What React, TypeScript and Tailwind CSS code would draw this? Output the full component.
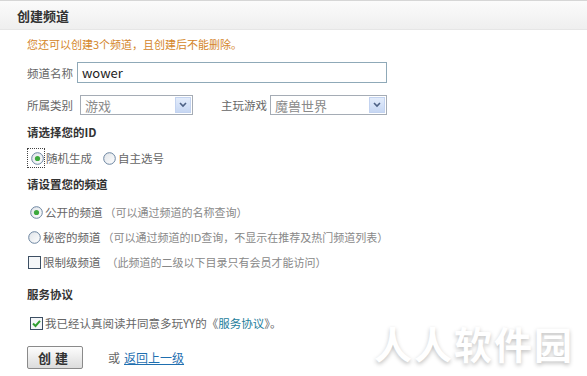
import React from 'react';

const font = { fontFamily: '"Noto Sans CJK SC", "Liberation Sans", sans-serif' };

function Radio({ checked }: { checked?: boolean }) {
  return (
    <svg width="13" height="13" viewBox="0 0 13 13" className="shrink-0">
      <defs>
        <linearGradient id="rg" x1="0" y1="0" x2="1" y2="1">
          <stop offset="0" stopColor="#dfe3e8" />
          <stop offset="1" stopColor="#ffffff" />
        </linearGradient>
      </defs>
      <circle cx="6.5" cy="6.5" r="5.8" fill="url(#rg)" stroke="#6b84a0" strokeWidth="1" />
      {checked && <circle cx="6.5" cy="6.5" r="2.6" fill="#3da93d" />}
    </svg>
  );
}

function Checkbox({ checked }: { checked?: boolean }) {
  return (
    <svg width="13" height="13" viewBox="0 0 13 13" className="shrink-0">
      <rect x="0.5" y="0.5" width="12" height="12" fill="#f4f6f8" stroke="#3d4f63" />
      {checked && <path d="M3 6.5 L5.5 9 L10 3.8" fill="none" stroke="#2f9e2f" strokeWidth="2" />}
    </svg>
  );
}

function Select({ value, width }: { value: string; width: string }) {
  return (
    <div className={`flex h-[20px] items-center border border-[#a5acb5] bg-white ${width}`}>
      <span className="flex-1 whitespace-nowrap pl-[4px] text-[13px] leading-none text-[#8a8a8a]">{value}</span>
      <div className="mr-[1px] flex h-[16px] w-[16px] items-center justify-center border border-[#c3d3f0] bg-gradient-to-b from-[#e3ecfb] to-[#c7d7f3]">
        <svg width="8" height="6" viewBox="0 0 8 6">
          <path d="M1 1 L4 4 L7 1" fill="none" stroke="#4d6185" strokeWidth="1.6" />
        </svg>
      </div>
    </div>
  );
}

export default function App() {
  return (
    <div className="relative h-[376px] w-[587px] overflow-hidden bg-white" style={font}>
      <div className="flex h-[30px] items-center border-t border-b border-t-[#d6d6d6] border-b-[#e6e6e6] bg-gradient-to-b from-[#fbfbfb] to-[#efefef] pl-[17px]">
        <span className="text-[13px] leading-none font-bold text-[#333]">创建频道</span>
      </div>

      <div className="flex flex-col whitespace-nowrap pl-[27px] text-[11.5px] leading-[16px] text-[#666]">
        <div className="mt-[6px] h-[16px] text-[11px] text-[#d4862a]">您还可以创建3个频道，且创建后不能删除。</div>

        <div className="mt-[10px] flex h-[21px] items-center">
          <span className="w-[50px]">频道名称</span>
          <div className="flex h-[21px] w-[310px] items-center border border-[#8fa9b8] pl-[4px] text-[13px] text-[#222]">
            wower
          </div>
        </div>

        <div className="mt-[12px] flex h-[20px] items-center">
          <span className="w-[53px]">所属类别</span>
          <Select value="游戏" width="w-[113px]" />
          <span className="ml-[28px] w-[49px]">主玩游戏</span>
          <Select value="魔兽世界" width="w-[117px]" />
        </div>

        <div className="mt-[9px] h-[16px] font-bold text-[#333]">请选择您的ID</div>

        <div className="mt-[8px] flex h-[20px] items-center">
          <div className="flex h-[20px] items-center border border-dotted border-[#444] pl-[3px]">
            <Radio checked />
          </div>
          <span className="ml-[1px]">随机生成</span>
          <span className="ml-[11px] flex items-center"><Radio /></span>
          <span className="ml-[2px]">自主选号</span>
        </div>

        <div className="mt-[8px] h-[16px] font-bold text-[#333]">请设置您的频道</div>

        <div className="mt-[12px] flex h-[16px] items-center gap-[2px] pl-[3px]">
          <Radio checked />
          <span>公开的频道</span>
          <span className="text-[11px] text-[#888]">（可以通过频道的名称查询）</span>
        </div>
        <div className="mt-[9px] flex h-[16px] items-center gap-[2px] pl-[1px]">
          <Radio />
          <span>秘密的频道</span>
          <span className="text-[11px] text-[#888]">（可以通过频道的ID查询，不显示在推荐及热门频道列表）</span>
        </div>
        <div className="mt-[9px] flex h-[16px] items-center gap-[2px] pl-[1px]">
          <Checkbox />
          <span>限制级频道</span>
          <span className="ml-[4px] text-[11px] text-[#888]">（此频道的二级以下目录只有会员才能访问）</span>
        </div>

        <div className="mt-[16px] h-[16px] font-bold text-[#333]">服务协议</div>

        <div className="mt-[13px] flex h-[16px] items-center gap-[2px] pl-[3px]">
          <Checkbox checked />
          <span>
            我已经认真阅读并同意多玩YY的《<span className="text-[#1d7d9b]">服务协议</span>》。
          </span>
        </div>

        <div className="mt-[15px] flex h-[23px] items-center">
          <button className="h-[23px] w-[56px] rounded-[2px] border border-[#8a8a8a] bg-gradient-to-b from-[#fdfdfd] to-[#dcdcdc] text-[13px] leading-none font-bold tracking-[4px] text-[#333]">
            创建
          </button>
          <span className="ml-[25px] text-[12px] text-[#666]">或</span>
          <a className="ml-[4px] text-[12px] text-[#1f6fb0] underline">返回上一级</a>
        </div>
      </div>

      <div
        className="absolute left-[374px] top-[324px] text-[38px] font-bold leading-none tracking-[2px] text-white"
        style={{ textShadow: '0 2px 4px rgba(0,0,0,0.25)' }}
      >
        人人软件园
      </div>
    </div>
  );
}
